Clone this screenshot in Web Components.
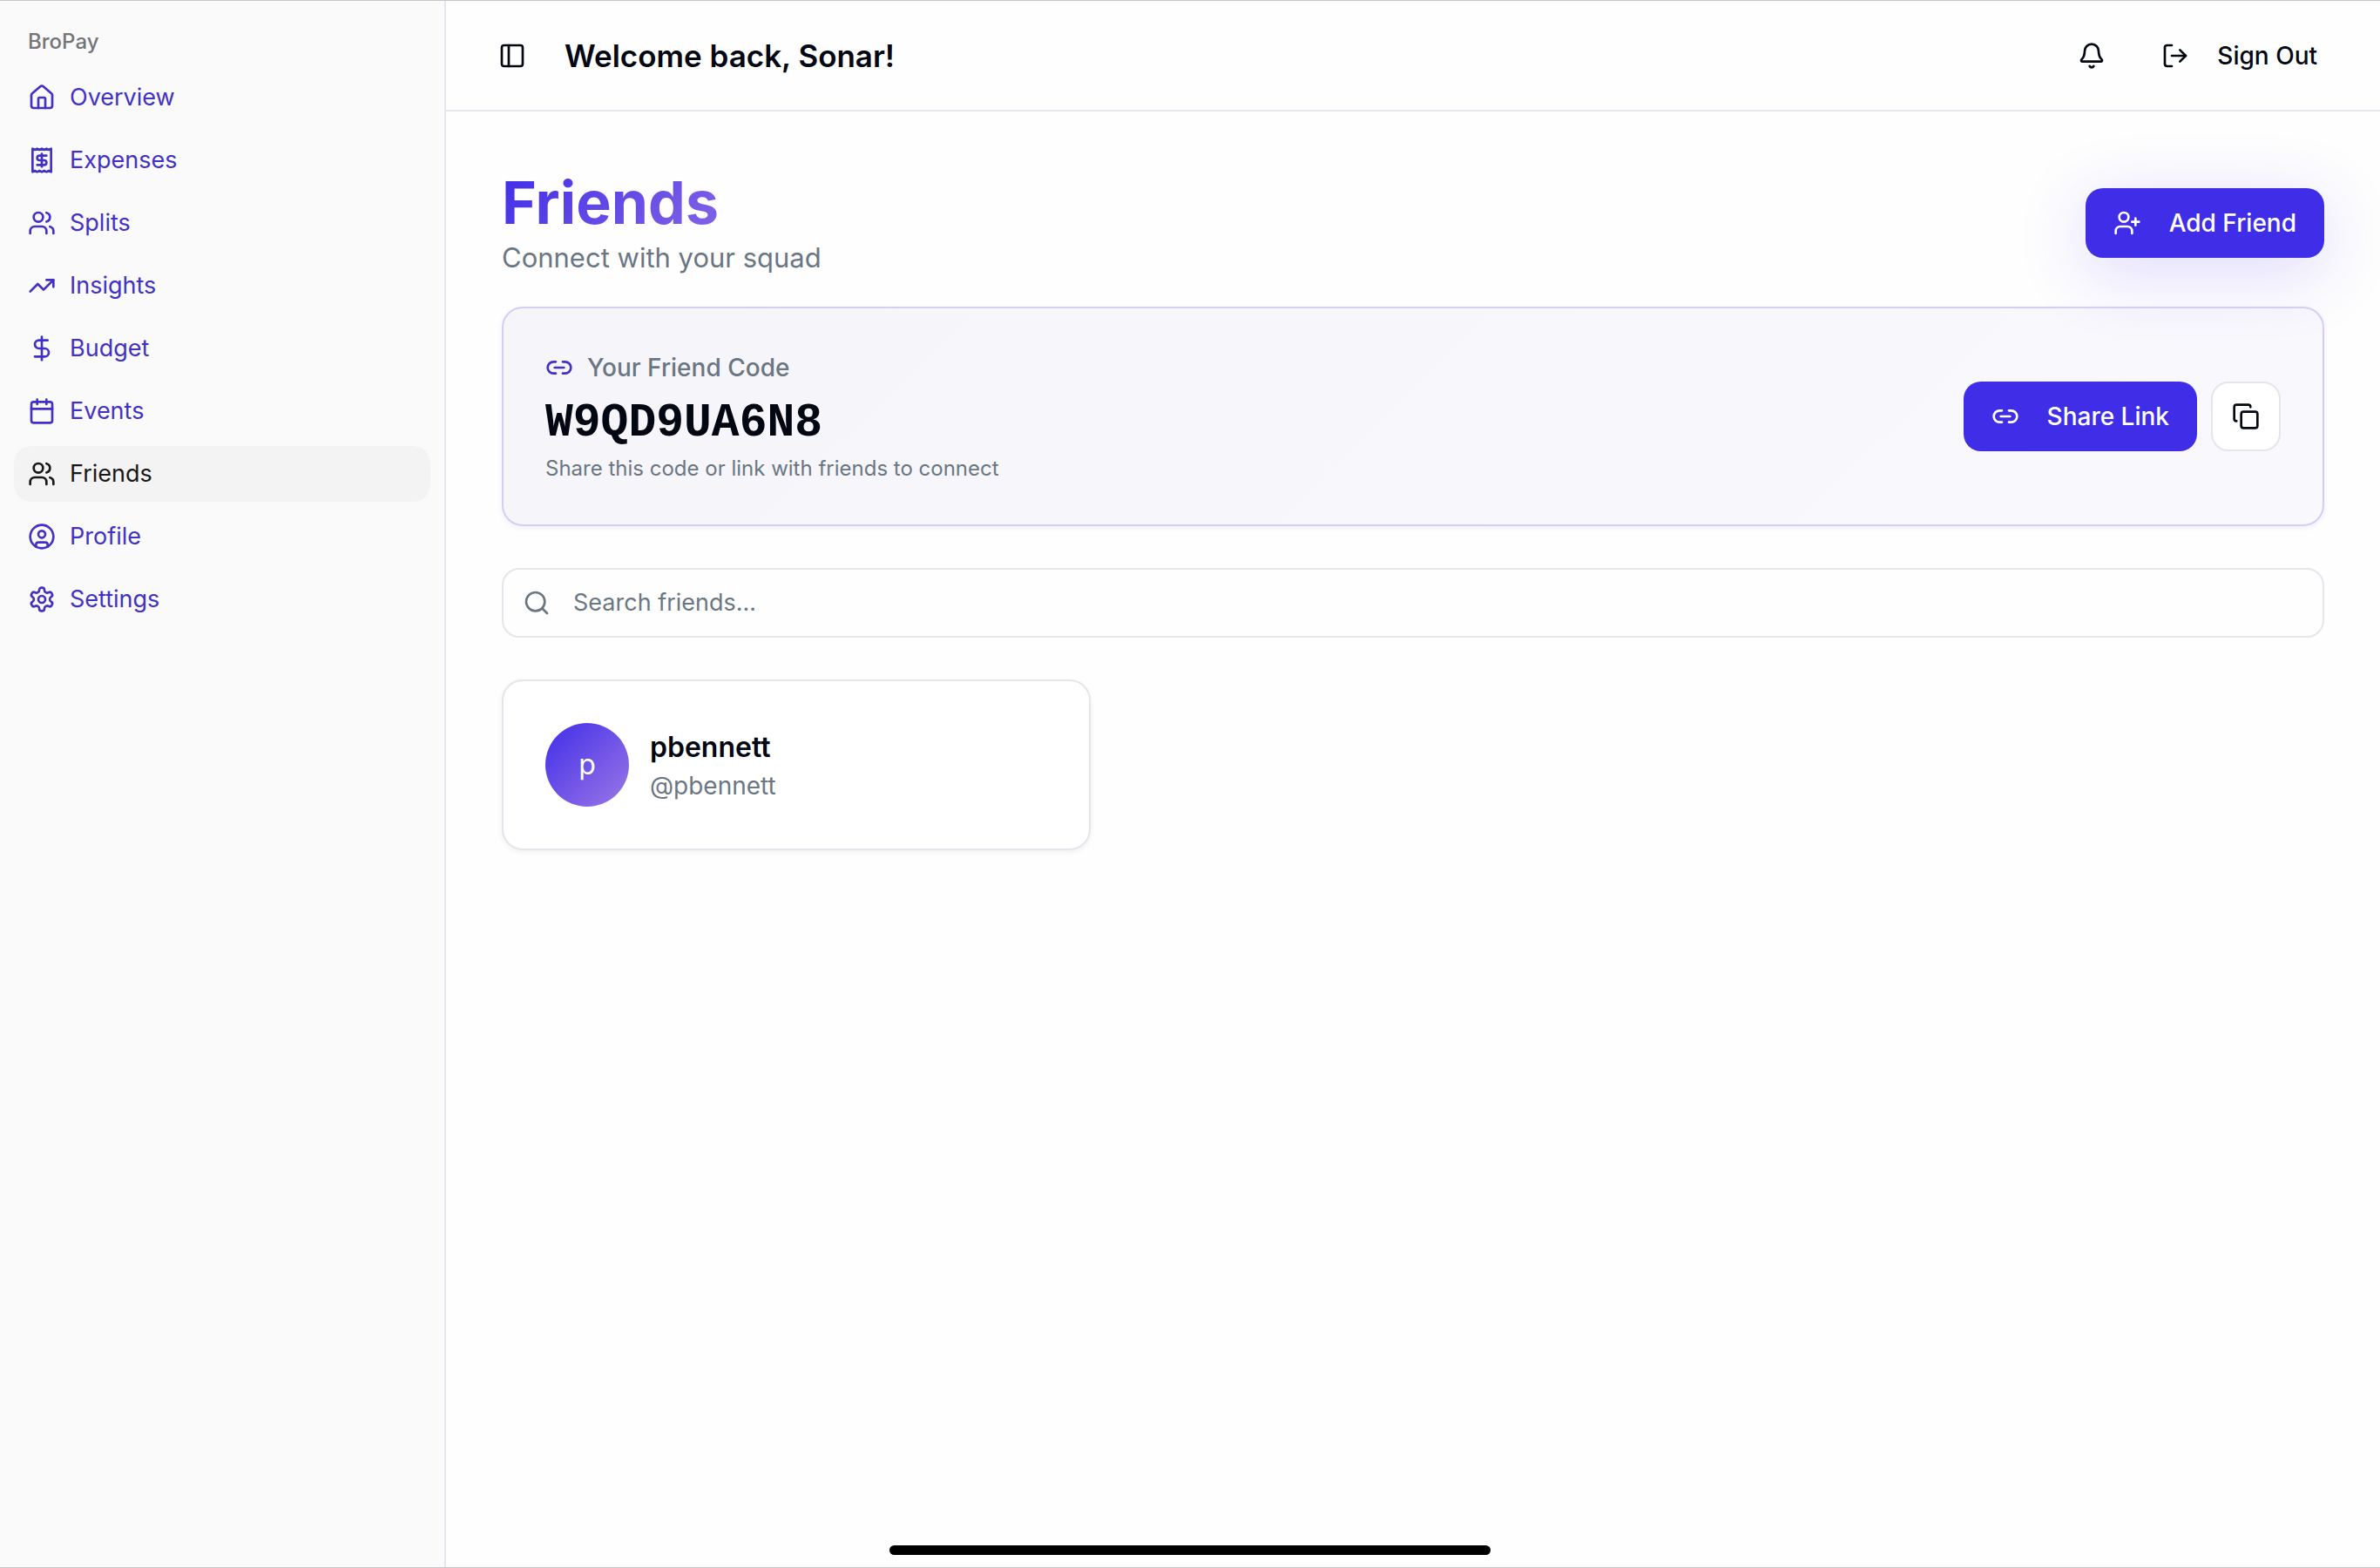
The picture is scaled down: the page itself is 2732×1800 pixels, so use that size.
<!DOCTYPE html>
<html lang="en">
<head>
<meta charset="utf-8">
<meta name="viewport" content="width=device-width, initial-scale=1">
<title>BroPay</title>
<style>
  body {
    margin: 0;
    font-family: Inter, "Liberation Sans", sans-serif;
    font-size: 28px;
    line-height: 40px;
    color: #030712;
    background: #fefefe;
    --primary: #402de8;
    --primary-ink: #4231c4;
    --accent: #9c78e6;
    --muted: #6b7683;
    --border: #e3e6ea;
  }
</style>
</head>
<body>

<bro-app>
  <bro-sidebar slot="sidebar" heading="BroPay">
    <bro-nav-item icon="house" href="#overview">Overview</bro-nav-item>
    <bro-nav-item icon="receipt" href="#expenses">Expenses</bro-nav-item>
    <bro-nav-item icon="users" href="#splits">Splits</bro-nav-item>
    <bro-nav-item icon="trending" href="#insights">Insights</bro-nav-item>
    <bro-nav-item icon="dollar" href="#budget">Budget</bro-nav-item>
    <bro-nav-item icon="calendar" href="#events">Events</bro-nav-item>
    <bro-nav-item icon="users" href="#friends" active>Friends</bro-nav-item>
    <bro-nav-item icon="profile" href="#profile">Profile</bro-nav-item>
    <bro-nav-item icon="settings" href="#settings">Settings</bro-nav-item>
  </bro-sidebar>

  <bro-topbar slot="topbar">Welcome back, Sonar!</bro-topbar>

  <bro-page-header heading="Friends" subheading="Connect with your squad">
    <bro-button variant="raised" icon="user-plus">Add Friend</bro-button>
  </bro-page-header>
  <friend-code code="W9QD9UA6N8"></friend-code>
  <friend-search></friend-search>
  <friend-grid>
    <friend-card name="pbennett" handle="@pbennett"></friend-card>
  </friend-grid>
</bro-app>

<script>
const ICONS = {
  "house": `<path d="M15 21v-8a1 1 0 0 0-1-1h-4a1 1 0 0 0-1 1v8"/><path d="M3 10a2 2 0 0 1 .709-1.528l7-5.999a2 2 0 0 1 2.582 0l7 5.999A2 2 0 0 1 21 10v9a2 2 0 0 1-2 2H5a2 2 0 0 1-2-2z"/>`,
  "receipt": `<path d="M4 2v20l2-1 2 1 2-1 2 1 2-1 2 1 2-1 2 1V2l-2 1-2-1-2 1-2-1-2 1-2-1-2 1Z"/><path d="M16 8h-6a2 2 0 1 0 0 4h4a2 2 0 1 1 0 4H8"/><path d="M12 17.5v-11"/>`,
  "users": `<path d="M16 21v-2a4 4 0 0 0-4-4H6a4 4 0 0 0-4 4v2"/><circle cx="9" cy="7" r="4"/><path d="M22 21v-2a4 4 0 0 0-3-3.87"/><path d="M16 3.13a4 4 0 0 1 0 7.75"/>`,
  "trending": `<polyline points="22 7 13.5 15.5 8.5 10.5 2 17"/><polyline points="16 7 22 7 22 13"/>`,
  "dollar": `<line x1="12" x2="12" y1="2" y2="22"/><path d="M17 5H9.5a3.5 3.5 0 0 0 0 7h5a3.5 3.5 0 0 1 0 7H6"/>`,
  "calendar": `<path d="M8 2v4"/><path d="M16 2v4"/><rect width="18" height="18" x="3" y="4" rx="2"/><path d="M3 10h18"/>`,
  "profile": `<circle cx="12" cy="12" r="10"/><circle cx="12" cy="10" r="3"/><path d="M7 20.662V19a2 2 0 0 1 2-2h6a2 2 0 0 1 2 2v1.662"/>`,
  "settings": `<path d="M12.22 2h-.44a2 2 0 0 0-2 2v.18a2 2 0 0 1-1 1.73l-.43.25a2 2 0 0 1-2 0l-.15-.08a2 2 0 0 0-2.73.73l-.22.38a2 2 0 0 0 .73 2.73l.15.1a2 2 0 0 1 1 1.72v.51a2 2 0 0 1-1 1.74l-.15.09a2 2 0 0 0-.73 2.73l.22.38a2 2 0 0 0 2.73.73l.15-.08a2 2 0 0 1 2 0l.43.25a2 2 0 0 1 1 1.73V20a2 2 0 0 0 2 2h.44a2 2 0 0 0 2-2v-.18a2 2 0 0 1 1-1.73l.43-.25a2 2 0 0 1 2 0l.15.08a2 2 0 0 0 2.73-.73l.22-.39a2 2 0 0 0-.73-2.73l-.15-.08a2 2 0 0 1-1-1.74v-.5a2 2 0 0 1 1-1.74l.15-.09a2 2 0 0 0 .73-2.73l-.22-.38a2 2 0 0 0-2.73-.73l-.15.08a2 2 0 0 1-2 0l-.43-.25a2 2 0 0 1-1-1.73V4a2 2 0 0 0-2-2z"/><circle cx="12" cy="12" r="3"/>`,
  "panel": `<rect width="18" height="18" x="3" y="3" rx="2"/><path d="M9 3v18"/>`,
  "bell": `<path d="M10.268 21a2 2 0 0 0 3.464 0"/><path d="M3.262 15.326A1 1 0 0 0 4 17h16a1 1 0 0 0 .74-1.673C19.41 13.956 18 12.499 18 8A6 6 0 0 0 6 8c0 4.499-1.411 5.956-2.738 7.326"/>`,
  "log-out": `<path d="M9 21H5a2 2 0 0 1-2-2V5a2 2 0 0 1 2-2h4"/><polyline points="16 17 21 12 16 7"/><line x1="21" x2="9" y1="12" y2="12"/>`,
  "user-plus": `<path d="M16 21v-2a4 4 0 0 0-4-4H6a4 4 0 0 0-4 4v2"/><circle cx="9" cy="7" r="4"/><line x1="19" x2="19" y1="8" y2="14"/><line x1="22" x2="16" y1="11" y2="11"/>`,
  "link": `<path d="M9 17H7A5 5 0 0 1 7 7h2"/><path d="M15 7h2a5 5 0 1 1 0 10h-2"/><line x1="8" x2="16" y1="12" y2="12"/>`,
  "copy": `<rect width="14" height="14" x="8" y="8" rx="2"/><path d="M4 16c-1.1 0-2-.9-2-2V4c0-1.1.9-2 2-2h10c1.1 0 2 .9 2 2"/>`,
  "search": `<circle cx="11" cy="11" r="8"/><path d="m21 21-4.3-4.3"/>`
};

// Shared base: fills an open shadow root with the element's styles and markup
class BroElement extends HTMLElement {
  connectedCallback() {
    if (this.shadowRoot) return;
    const template = document.createElement("template");
    template.innerHTML = `<style>* { box-sizing: border-box; } ${this.styles}</style>${this.markup}`;
    this.attachShadow({ mode: "open" }).appendChild(template.content.cloneNode(true));
  }
  attr(name) {
    return this.getAttribute(name) || "";
  }
}

class BroIcon extends BroElement {
  get styles() {
    return `
:host {
  display: block;
  flex: none;
  width: 32px;
  height: 32px;
}
svg {
  display: block;
  width: 100%;
  height: 100%;
}`;
  }
  get markup() {
    return `<svg viewBox="0 0 24 24" fill="none" stroke="currentColor" stroke-width="2" stroke-linecap="round" stroke-linejoin="round" aria-hidden="true">${ICONS[this.attr("name")]}</svg>`;
  }
}

class BroApp extends BroElement {
  get styles() {
    return `
:host {
  display: grid;
  grid-template-columns: 512px 1fr;
  box-sizing: border-box;
  min-height: 100vh;
  border-top: 1px solid #c6c6c8;
  border-bottom: 1px solid #c6c6c8;
}
.content {
  min-width: 0;
}
main {
  display: flex;
  flex-direction: column;
  gap: 48px;
  padding: 64px;
}
.home-indicator {
  position: fixed;
  bottom: 15px;
  left: 50%;
  width: 690px;
  height: 11px;
  margin-left: -345px;
  border-radius: 6px;
  background: #000;
}`;
  }
  get markup() {
    return `
<slot name="sidebar"></slot>
<div class="content">
  <slot name="topbar"></slot>
  <main><slot></slot></main>
</div>
<div class="home-indicator"></div>`;
  }
}

class BroSidebar extends BroElement {
  get styles() {
    return `
:host {
  display: block;
  box-sizing: border-box;
  padding: 15px 16px;
  background: #fafafa;
  border-right: 2px solid var(--border);
}
h2 {
  display: flex;
  align-items: center;
  height: 64px;
  margin: 0;
  padding: 0 16px;
  font-size: 24px;
  font-weight: 500;
  color: #737578;
}
nav {
  display: flex;
  flex-direction: column;
  gap: 8px;
}`;
  }
  get markup() {
    return `
<h2>${this.attr("heading")}</h2>
<nav aria-label="Main"><slot></slot></nav>`;
  }
}

class BroNavItem extends BroElement {
  get styles() {
    return `
:host {
  display: block;
}
a {
  display: flex;
  align-items: center;
  gap: 16px;
  height: 64px;
  padding: 0 16px;
  border-radius: 20px;
  font-size: 27px;
  color: var(--primary-ink);
  text-decoration: none;
}
:host([active]) a {
  color: #18181b;
  background: #f3f3f3;
}`;
  }
  get markup() {
    const current = this.hasAttribute("active") ? ` aria-current="page"` : "";
    return `<a href="${this.attr("href")}"${current}><bro-icon name="${this.attr("icon")}"></bro-icon><slot></slot></a>`;
  }
}

class BroTopbar extends BroElement {
  get styles() {
    return `
:host {
  display: flex;
  align-items: center;
  justify-content: space-between;
  box-sizing: border-box;
  height: 127px;
  padding: 0 48px;
  border-bottom: 2px solid var(--border);
}
.start {
  display: flex;
  align-items: center;
  gap: 32px;
}
.end {
  display: flex;
  align-items: center;
  gap: 16px;
}
h1 {
  margin: 0;
  font-size: 35px;
  font-weight: 600;
  line-height: 56px;
}
.toggle {
  display: flex;
  align-items: center;
  justify-content: center;
  width: 56px;
  height: 56px;
  padding: 0;
  border: 0;
  color: inherit;
  background: none;
}`;
  }
  get markup() {
    return `
<div class="start">
  <button class="toggle" type="button" aria-label="Toggle sidebar"><bro-icon name="panel"></bro-icon></button>
  <h1><slot></slot></h1>
</div>
<div class="end">
  <bro-button variant="ghost" icon="bell" label="Notifications"></bro-button>
  <bro-button variant="ghost" icon="log-out">Sign Out</bro-button>
</div>`;
  }
}

// variant: raised, outline, ghost; a label attribute makes it icon-only
class BroButton extends BroElement {
  get styles() {
    return `
:host {
  display: block;
  flex: none;
}
button {
  display: flex;
  align-items: center;
  justify-content: center;
  gap: 32px;
  height: 80px;
  padding: 0 32px;
  border: 0;
  border-radius: 20px;
  font: inherit;
  font-weight: 500;
  color: #fff;
  background: var(--primary);
}
:host([variant="raised"]) button {
  box-shadow: 0 16px 80px rgba(64, 45, 232, 0.18);
}
:host([variant="ghost"]) button {
  padding: 0 24px;
  color: inherit;
  background: none;
}
:host([variant="outline"]) button {
  color: inherit;
  background: #fff;
  border: 2px solid var(--border);
}
:host([label]) button {
  width: 80px;
  padding: 0;
}`;
  }
  get markup() {
    const icon = `<bro-icon name="${this.attr("icon")}"></bro-icon>`;
    if (this.hasAttribute("label")) {
      return `<button type="button" aria-label="${this.attr("label")}">${icon}</button>`;
    }
    return `<button type="button">${icon}<slot></slot></button>`;
  }
}

class BroPageHeader extends BroElement {
  get styles() {
    return `
:host {
  display: flex;
  align-items: center;
  justify-content: space-between;
  margin-bottom: -16px;
}
h2 {
  margin: 0;
  font-size: 68px;
  font-weight: 700;
  line-height: 80px;
  color: transparent;
  background: linear-gradient(135deg, var(--primary), var(--accent));
  background-clip: text;
  -webkit-background-clip: text;
}
p {
  margin: 0;
  font-size: 31px;
  line-height: 48px;
  color: var(--muted);
}`;
  }
  get markup() {
    return `
<div>
  <h2>${this.attr("heading")}</h2>
  <p>${this.attr("subheading")}</p>
</div>
<slot></slot>`;
  }
}

class FriendCode extends BroElement {
  get styles() {
    return `
:host {
  display: flex;
  align-items: center;
  justify-content: space-between;
  padding: 48px;
  border: 2px solid #d3cff0;
  border-radius: 24px;
  background: linear-gradient(135deg, rgba(52, 40, 160, 0.045), rgba(110, 90, 230, 0.035));
  box-shadow: 0 2px 6px rgba(64, 45, 232, 0.08);
}
.title {
  display: flex;
  align-items: center;
  gap: 16px;
  font-weight: 500;
  color: var(--muted);
}
.title bro-icon {
  color: var(--primary-ink);
}
.code {
  margin-top: 12px;
  margin-bottom: 4px;
  font-family: "Liberation Mono", monospace;
  font-size: 53px;
  font-weight: 700;
  line-height: 64px;
}
.hint {
  font-size: 24px;
  line-height: 32px;
  color: var(--muted);
}
.actions {
  display: flex;
  gap: 16px;
}`;
  }
  get markup() {
    return `
<div>
  <div class="title"><bro-icon name="link"></bro-icon>Your Friend Code</div>
  <div class="code">${this.attr("code")}</div>
  <div class="hint">Share this code or link with friends to connect</div>
</div>
<div class="actions">
  <bro-button icon="link">Share Link</bro-button>
  <bro-button variant="outline" icon="copy" label="Copy code"></bro-button>
</div>`;
  }
}

class FriendSearch extends BroElement {
  get styles() {
    return `
:host {
  display: block;
}
label {
  display: flex;
  align-items: center;
  gap: 26px;
  height: 80px;
  padding: 0 22px;
  border: 2px solid var(--border);
  border-radius: 20px;
  color: var(--muted);
}
input {
  flex: 1;
  min-width: 0;
  padding: 0;
  border: 0;
  outline: 0;
  font: inherit;
  font-size: 27px;
  color: #030712;
  background: none;
}
input::placeholder {
  color: var(--muted);
  opacity: 1;
}`;
  }
  get markup() {
    return `<label><bro-icon name="search"></bro-icon><input type="text" placeholder="Search friends..." aria-label="Search friends"></label>`;
  }
}

class FriendGrid extends BroElement {
  get styles() {
    return `
:host {
  display: grid;
  grid-template-columns: repeat(3, 1fr);
  gap: 32px;
}`;
  }
  get markup() {
    return `<slot></slot>`;
  }
}

class FriendCard extends BroElement {
  get styles() {
    return `
:host {
  display: flex;
  align-items: center;
  gap: 24px;
  padding: 48px;
  border: 2px solid var(--border);
  border-radius: 24px;
  background: #fff;
  box-shadow: 0 2px 6px rgba(3, 7, 18, 0.06);
}
.avatar {
  display: flex;
  align-items: center;
  justify-content: center;
  width: 96px;
  height: 96px;
  border-radius: 50%;
  font-size: 32px;
  color: #fff;
  background: linear-gradient(135deg, var(--primary), var(--accent));
}
.name {
  font-size: 32px;
  font-weight: 600;
  line-height: 48px;
}
.handle {
  color: var(--muted);
}`;
  }
  get markup() {
    const name = this.attr("name");
    return `
<div class="avatar">${name[0]}</div>
<div>
  <div class="name">${name}</div>
  <div class="handle">${this.attr("handle")}</div>
</div>`;
  }
}

customElements.define("bro-icon", BroIcon);
customElements.define("bro-button", BroButton);
customElements.define("bro-nav-item", BroNavItem);
customElements.define("bro-sidebar", BroSidebar);
customElements.define("bro-topbar", BroTopbar);
customElements.define("bro-page-header", BroPageHeader);
customElements.define("friend-code", FriendCode);
customElements.define("friend-search", FriendSearch);
customElements.define("friend-card", FriendCard);
customElements.define("friend-grid", FriendGrid);
customElements.define("bro-app", BroApp);
</script>
</body>
</html>
